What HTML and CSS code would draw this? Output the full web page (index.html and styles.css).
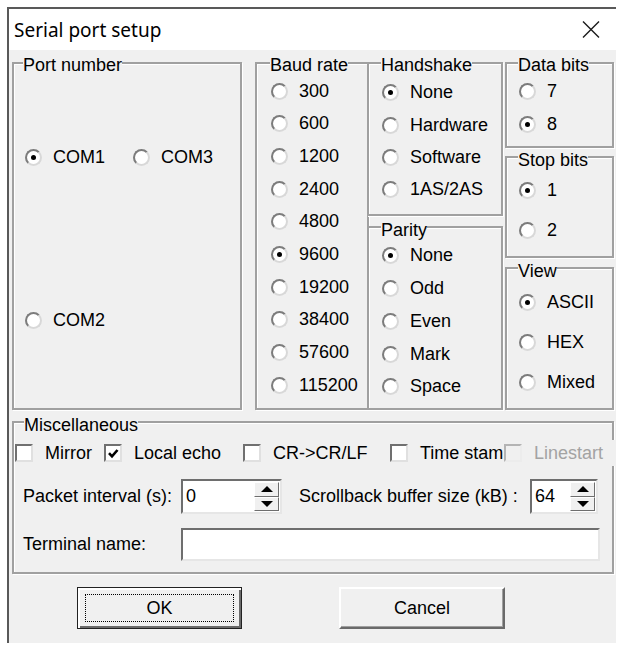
FILE: index.html
```html
<!DOCTYPE html>
<html>
<head>
<meta charset="utf-8">
<link rel="stylesheet" href="styles.css">
</head>
<body>
<div class="window">
  <div class="titlebar">
    <span class="title">Serial port setup</span>
    <svg class="close" width="18" height="17" viewBox="0 0 18 17"><path d="M1 0.5 L17 16.5 M17 0.5 L1 16.5" stroke="#1a1a1a" stroke-width="1.4" fill="none"/></svg>
  </div>
  <div class="client">
    <div class="toprow">
      <fieldset class="group port">
        <legend>Port number</legend>
        <div class="port-row1">
          <div class="opt w108"><span class="radio on"></span>COM1</div>
          <div class="opt"><span class="radio"></span>COM3</div>
        </div>
        <div class="port-row2">
          <div class="opt"><span class="radio"></span>COM2</div>
        </div>
      </fieldset>
      <fieldset class="group baud">
        <legend>Baud rate</legend>
        <div class="opt"><span class="radio"></span>300</div>
        <div class="opt"><span class="radio"></span>600</div>
        <div class="opt"><span class="radio"></span>1200</div>
        <div class="opt"><span class="radio"></span>2400</div>
        <div class="opt"><span class="radio"></span>4800</div>
        <div class="opt"><span class="radio on"></span>9600</div>
        <div class="opt"><span class="radio"></span>19200</div>
        <div class="opt"><span class="radio"></span>38400</div>
        <div class="opt"><span class="radio"></span>57600</div>
        <div class="opt"><span class="radio"></span>115200</div>
      </fieldset>
      <div class="col mid">
        <fieldset class="group hand">
          <legend>Handshake</legend>
          <div class="opt"><span class="radio on"></span>None</div>
          <div class="opt"><span class="radio"></span>Hardware</div>
          <div class="opt"><span class="radio"></span>Software</div>
          <div class="opt"><span class="radio"></span>1AS/2AS</div>
        </fieldset>
        <fieldset class="group parity">
          <legend>Parity</legend>
          <div class="opt"><span class="radio on"></span>None</div>
          <div class="opt"><span class="radio"></span>Odd</div>
          <div class="opt"><span class="radio"></span>Even</div>
          <div class="opt"><span class="radio"></span>Mark</div>
          <div class="opt"><span class="radio"></span>Space</div>
        </fieldset>
      </div>
      <div class="col right">
        <fieldset class="group data">
          <legend>Data bits</legend>
          <div class="opt"><span class="radio"></span>7</div>
          <div class="opt"><span class="radio on"></span>8</div>
        </fieldset>
        <fieldset class="group stop">
          <legend>Stop bits</legend>
          <div class="opt"><span class="radio on"></span>1</div>
          <div class="opt"><span class="radio"></span>2</div>
        </fieldset>
        <fieldset class="group view">
          <legend>View</legend>
          <div class="opt"><span class="radio on"></span>ASCII</div>
          <div class="opt"><span class="radio"></span>HEX</div>
          <div class="opt"><span class="radio"></span>Mixed</div>
        </fieldset>
      </div>
    </div>
    <fieldset class="group misc">
      <legend>Miscellaneous</legend>
      <div class="checks">
        <div class="cb cb1"><span class="check"></span>Mirror</div>
        <div class="cb cb2"><span class="check"><svg width="14" height="14" viewBox="0 0 14 14"><path d="M3 7.2 L6 10.4 L11.5 4" stroke="#000" stroke-width="2.6" fill="none"/></svg></span>Local echo</div>
        <div class="cb cb3"><span class="check"></span>CR-&gt;CR/LF</div>
        <div class="cb cb4"><span class="check"></span>Time stam</div>
        <div class="cb cb5 disabled"><span class="check"></span>Linestart</div>
      </div>
      <div class="form-row r2">
        <span class="lbl">Packet interval (s):</span>
        <div class="field spin spin1"><span class="val">0</span><span class="spinbtns"><span class="sb"><span class="up"></span></span><span class="sb"><span class="down"></span></span></span></div>
        <span class="lbl2">Scrollback buffer size (kB) :</span>
        <div class="field spin spin2"><span class="val">64</span><span class="spinbtns"><span class="sb"><span class="up"></span></span><span class="sb"><span class="down"></span></span></span></div>
      </div>
      <div class="form-row r3">
        <span class="lbl">Terminal name:</span>
        <div class="field textbox"></div>
      </div>
    </fieldset>
    <div class="buttons">
      <div class="btn default"><span class="focus">OK</span></div>
      <div class="btn cancel"><span class="focus nofocus">Cancel</span></div>
    </div>
  </div>
</div>
</body>
</html>
```
FILE: styles.css
```css
* { box-sizing: border-box; }
body {
  margin: 0;
  background: #fff;
  font-family: "Liberation Sans", Arial, sans-serif;
  font-size: 18px;
  color: #000;
}
.window {
  margin: 7px 0 0 7px;
  width: 609px;
  height: 636px;
  border-top: 2px solid #595959;
  border-left: 2px solid #595959;
  display: flex;
  flex-direction: column;
}
.titlebar {
  height: 41px;
  flex: none;
  background: #fff;
  display: flex;
  align-items: center;
  justify-content: space-between;
  padding: 0 16px 0 5px;
}
.title {
  font-family: "Noto Sans", sans-serif;
  font-size: 19px;
  color: #000;
}
.close { display: block; }
.client {
  flex: 1;
  background: #f0f0f0;
  padding: 0 0 0 3px;
}
.toprow {
  display: flex;
  height: 360px;
  align-items: stretch;
}
.group {
  margin: 0;
  padding: 0;
  min-width: 0;
  border: 2px solid #a0a0a0;
  box-shadow: inset 1px 1px 0 #fff, 1px 1px 0 #fff;
}
.group legend {
  padding: 5px 0 0;
  margin-left: -1px;
  line-height: 20px;
  background: linear-gradient(transparent 11px, #f0f0f0 11px, #f0f0f0 15px, transparent 15px);
}
.opt {
  display: flex;
  align-items: center;
  white-space: nowrap;
}
.radio {
  width: 17px;
  height: 17px;
  flex: none;
  border-radius: 50%;
  background: #fff;
  border: 2px solid;
  border-color: #7c7c7c #d8d8d8 #d8d8d8 #7c7c7c;
  margin-right: 11px;
  display: flex;
  align-items: center;
  justify-content: center;
}
.radio.on::after {
  content: "";
  width: 5px;
  height: 5px;
  border-radius: 50%;
  background: #000;
}
.port {
  width: 230px;
  padding: 69px 0 0 11px;
}
.port legend { margin-left: -2px; }
.port-row1 { display: flex; }
.port .opt { height: 26px; }
.w108 { width: 108px; }
.port-row2 { margin-top: 137px; }
.baud {
  width: 114px;
  margin-left: 13px;
  padding: 0 0 0 14px;
}
.baud .opt { height: 32.67px; }
.col { display: flex; flex-direction: column; }
.mid { width: 136px; margin-left: -2px; }
.hand { height: 166px; padding: 1.8px 0 0 13px; }
.hand .opt { height: 32.33px; }
.parity { flex: 1; margin-top: -1.5px; padding: 0 0 0 13px; }
.parity .opt { height: 32.75px; }
.right { width: 109px; margin-left: 2px; }
.data { height: 98px; padding: 0 0 0 12px; }
.data .opt { height: 33px; }
.stop { height: 113.5px; margin-top: -3.5px; padding: 0.5px 0 0 12px; }
.stop .opt { height: 40px; }
.view { flex: 1; margin-top: -2.5px; padding: 1.5px 0 0 12px; }
.view .opt { height: 40px; }

.misc {
  width: 602px;
  margin-top: -0.5px;
  padding: 0 0 11px 0;
}
.misc legend { margin-left: 10px; }
.checks {
  display: flex;
  height: 26px;
  margin: 5.5px -4px 0 1px;
}
.cb {
  display: flex;
  align-items: center;
  flex: none;
  overflow: hidden;
  white-space: nowrap;
  height: 26px;
  background: #f0f0f0;
}
.cb1 { width: 89px; }
.cb2 { width: 139px; }
.cb3 { width: 147px; }
.cb4 { width: 114px; }
.cb5 { flex: 1; }
.check {
  width: 18px;
  height: 18px;
  flex: none;
  background: #fff;
  border: 2px solid;
  border-color: #707070 #e0e0e0 #e0e0e0 #707070;
  margin-right: 12px;
}
.check svg { display: block; }
.disabled { color: #a3a3a3; }
.disabled .check {
  background: #f0f0f0;
  border-color: #b4b4b4 #ececec #ececec #b4b4b4;
}
.form-row {
  display: flex;
  align-items: center;
  margin-left: 9px;
}
.r2 { margin-top: 13px; height: 35px; }
.r3 { margin-top: 14px; height: 33px; }
.lbl { width: 158px; flex: none; white-space: nowrap; }
.lbl2 { margin-left: 17px; width: 231px; flex: none; white-space: nowrap; }
.field {
  background: #fff;
  border: 2px solid;
  border-color: #6e6e6e #e6e6e6 #e6e6e6 #6e6e6e;
}
.spin {
  display: flex;
  align-items: center;
  height: 35px;
  flex: none;
}
.spin1 { width: 101px; }
.spin2 { width: 68px; }
.val { padding-left: 3px; flex: 1; }
.spinbtns {
  display: flex;
  flex-direction: column;
  width: 25px;
  height: 29px;
  margin-right: 1px;
}
.sb {
  flex: 1;
  background: #f0f0f0;
  border: 1px solid;
  border-color: #fff #6e6e6e #6e6e6e #fff;
  display: flex;
  align-items: center;
  justify-content: center;
}
.up {
  width: 0;
  height: 0;
  border-left: 6px solid transparent;
  border-right: 6px solid transparent;
  border-bottom: 6px solid #000;
}
.down {
  width: 0;
  height: 0;
  border-left: 6px solid transparent;
  border-right: 6px solid transparent;
  border-top: 6px solid #000;
}
.textbox { width: 419px; height: 33px; flex: none; }
.buttons {
  display: flex;
  margin: 13px 0 0 65px;
}
.btn {
  width: 165px;
  height: 42px;
  background: #f0f0f0;
  border: 2px solid;
  border-color: #fff #6a6a6a #6a6a6a #fff;
  box-shadow: inset -1px -1px 0 #a0a0a0;
  padding: 5px 6px;
  display: flex;
}
.btn.default {
  border-color: #222;
  border-width: 1px;
  box-shadow: inset 1px 1px 0 #fff, inset 2px 2px 0 #fff, inset -1px -1px 0 #6a6a6a, inset -2px -2px 0 #6a6a6a;
  padding: 6px 7px;
}
.btn.cancel { width: 166px; margin-left: 97px; }
.focus {
  flex: 1;
  display: flex;
  align-items: center;
  justify-content: center;
  border: 1px dotted #000;
}
.focus.nofocus { border-color: transparent; }
```
